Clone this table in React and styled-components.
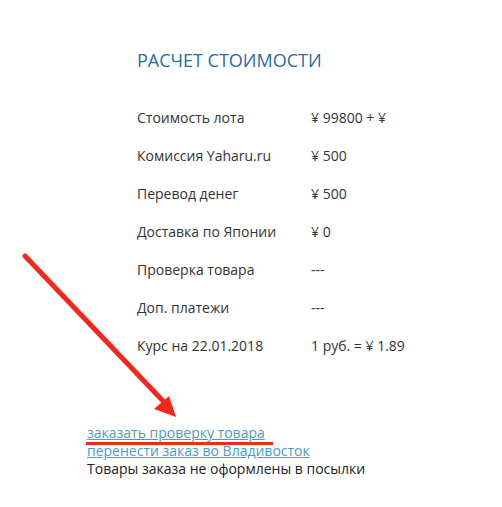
import React from "react"
import styled, { createGlobalStyle } from "styled-components"

const GlobalStyle = createGlobalStyle`
  body {
    margin: 0;
    background: #fff;
    font-family: "Open Sans", "Liberation Sans", sans-serif;
    color: #333;
  }
`

const Page = styled.div`
  position: relative;
  width: 502px;
  height: 507px;
  overflow: hidden;
  padding-top: 47px;
  box-sizing: border-box;
`

const Calc = styled.section`
  padding-left: 137px;
`

const Title = styled.h2`
  margin: 0 0 26px;
  font-size: 18px;
  font-weight: 400;
  line-height: 26px;
  color: #2b6ca3;
`

const Table = styled.div`
  display: grid;
  grid-template-columns: 174px auto;
  grid-auto-rows: 38px;
  align-items: center;
  font-size: 14px;
`

const Cell = styled.div`
  line-height: 20px;
`

const Links = styled.div`
  margin-top: 59px;
  padding-left: 87px;
  display: flex;
  flex-direction: column;
  font-size: 14px;
  line-height: 18px;
`

const Link = styled.a`
  color: #4a9cc6;
  text-decoration: underline;
  position: relative;
  align-self: flex-start;
  cursor: pointer;
`

const Marker = styled.span`
  position: absolute;
  left: -1px;
  right: -8px;
  bottom: -3px;
  height: 3px;
  background: #f4281c;
`

const Note = styled.span`
  color: #222;
`

const Arrow = styled.svg`
  position: absolute;
  left: 0;
  top: 0;
  pointer-events: none;
`

const rows = [
  ["Стоимость лота", "¥ 99800 + ¥"],
  ["Комиссия Yaharu.ru", "¥ 500"],
  ["Перевод денег", "¥ 500"],
  ["Доставка по Японии", "¥ 0"],
  ["Проверка товара", "---"],
  ["Доп. платежи", "---"],
  ["Курс на 22.01.2018", "1 руб. = ¥ 1.89"],
]

export default function App() {
  return (
    <Page>
      <GlobalStyle />
      <Calc>
        <Title>РАСЧЕТ СТОИМОСТИ</Title>
        <Table>
          {rows.map(([label, value]) => (
            <React.Fragment key={label}>
              <Cell>{label}</Cell>
              <Cell>{value}</Cell>
            </React.Fragment>
          ))}
        </Table>
      </Calc>
      <Links>
        <Link>
          заказать проверку товара
          <Marker />
        </Link>
        <Link>перенести заказ во Владивосток</Link>
        <Note>Товары заказа не оформлены в посылки</Note>
      </Links>
      <Arrow width="502" height="507">
        <line x1="25" y1="256" x2="163" y2="401" stroke="#f4281c" strokeWidth="5" strokeLinecap="round" />
        <polygon points="176,417 154,409 169,396" fill="#f4281c" />
      </Arrow>
    </Page>
  )
}
